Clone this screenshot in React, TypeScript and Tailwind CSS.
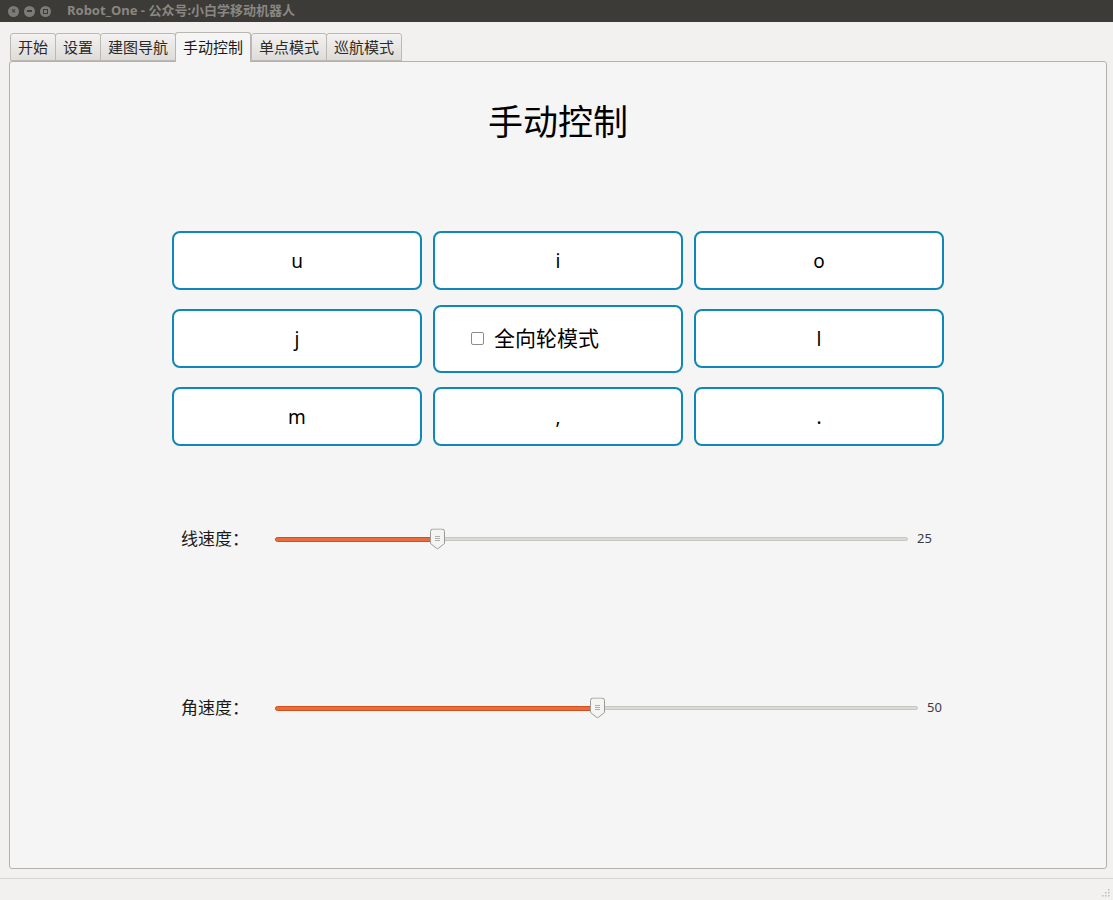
import React from 'react';

const TABS = ['开始', '设置', '建图导航', '手动控制', '单点模式', '巡航模式'];

const KEYS = [
  ['u', 'i', 'o'],
  ['j', null, 'l'],
  ['m', ',', '.'],
];

const FONT = { fontFamily: '"Noto Sans", "Noto Sans CJK SC", sans-serif' };

const Handle: React.FC = () => (
  <svg width="15" height="21" viewBox="0 0 15 21" className="absolute top-1/2 -translate-y-1/2 -ml-[7px]">
    <path d="M3 0.5 H12 Q14.5 0.5 14.5 3 V15 L7.5 20.5 L0.5 15 V3 Q0.5 0.5 3 0.5 Z" fill="#f4f4f3" stroke="#9c9a96" />
    <path d="M5 8 H10 M5 10 H10 M5 12 H10" stroke="#b0aeaa" strokeWidth="1" />
  </svg>
);

const Slider: React.FC<{ label: string; value: number; width: number }> = ({ label, value, width }) => {
  const pct = value / 100;
  return (
    <div className="flex items-center h-[24px]">
      <span className="w-[94px] text-[17px] text-[#1a1a1a]">{label}</span>
      <div className="relative h-[20px] flex items-center" style={{ width }}>
        <div className="absolute left-0 right-0 h-[4px] rounded-full bg-[#dcdad6] border border-[#c8c6c2]" />
        <div className="absolute left-0 h-[5px] rounded-full bg-[#ec6b3b] border border-[#d0501f]" style={{ width: (width - 14) * pct + 7 }} />
        <div className="absolute" style={{ left: (width - 14) * pct + 7 }}>
          <Handle />
        </div>
      </div>
      <span className="ml-[9px] text-[13px] text-[#3c3c3c]">{value}</span>
    </div>
  );
};

export default function App() {
  return (
    <div className="w-[1113px] h-[900px] flex flex-col bg-[#f2f1f0] overflow-hidden" style={FONT}>
      {/* title bar */}
      <div className="h-[22px] bg-[#3c3b37] flex items-center px-[8px] shrink-0">
        <div className="flex items-center gap-[5px]">
          <span className="w-[11px] h-[11px] rounded-full bg-[#7d7b76] flex items-center justify-center text-[8px] leading-none text-[#3c3b37] font-bold">×</span>
          <span className="w-[11px] h-[11px] rounded-full bg-[#7d7b76] flex items-center justify-center">
            <span className="w-[5px] h-[2px] bg-[#3c3b37]" />
          </span>
          <span className="w-[11px] h-[11px] rounded-full bg-[#7d7b76] flex items-center justify-center">
            <span className="w-[5px] h-[5px] border border-[#3c3b37]" />
          </span>
        </div>
        <span className="ml-[16px] text-[13px] font-bold text-[#8a8782]">Robot_One - 公众号:小白学移动机器人</span>
      </div>

      {/* tabs */}
      <div className="flex items-end pl-[10px] pt-[9px] h-[39px] shrink-0 relative z-10">
        {TABS.map((t, i) => {
          const active = i === 3;
          return (
            <div
              key={t}
              className={
                active
                  ? 'h-[30px] px-[7px] -mb-[1px] flex items-center text-[15px] text-[#1a1a1a] bg-[#f5f5f5] border border-b-0 border-[#b9b6b0] rounded-t-[3px]'
                  : 'h-[28px] px-[7px] flex items-center text-[15px] text-[#2a2a2a] bg-gradient-to-b from-[#f3f2f1] to-[#dedcd8] border border-[#bcb9b3] rounded-t-[3px] -mr-[1px]'
              }
            >
              {t}
            </div>
          );
        })}
      </div>

      {/* panel */}
      <div className="mx-[9px] w-[1098px] h-[808px] bg-[#f5f5f5] border border-[#b4b1ab] rounded-[3px] flex flex-col items-center shrink-0">
        <h1 className="mt-[37px] text-[35px] leading-[46px] text-black">手动控制</h1>

        <div className="mt-[86px] flex flex-col gap-[19px] w-[772px]">
          {KEYS.map((row, r) => (
            <div key={r} className="h-[59px] flex items-center gap-[11px]">
              {row.map((k, c) =>
                k === null ? (
                  <div
                    key={c}
                    className="w-[250px] h-[68px] shrink-0 bg-white border-2 border-[#0f88b9] rounded-[8px] flex items-center pl-[36px]"
                  >
                    <span className="w-[13px] h-[13px] border border-[#8e8c88] rounded-[2px] bg-white" />
                    <span className="ml-[10px] text-[21px] text-black">全向轮模式</span>
                  </div>
                ) : (
                  <div
                    key={c}
                    className="w-[250px] h-[59px] shrink-0 bg-white border-2 border-[#0f88b9] rounded-[8px] flex items-center justify-center text-[19px] text-black pt-[2px]"
                  >
                    {k}
                  </div>
                )
              )}
            </div>
          ))}
        </div>

        <div className="self-start ml-[171px] mt-[81px] flex flex-col">
          <Slider label="线速度：" value={25} width={633} />
          <div className="h-[145px]" />
          <Slider label="角速度：" value={50} width={643} />
        </div>
      </div>

      {/* status bar */}
      <div className="mt-[9px] flex-1 border-t border-[#d6d4d0] relative">
        <svg width="10" height="10" className="absolute right-[3px] bottom-[3px]">
          {[[8, 2], [8, 5], [5, 5], [8, 8], [5, 8], [2, 8]].map(([x, y], i) => (
            <rect key={i} x={x} y={y} width="1.5" height="1.5" fill="#c0beba" />
          ))}
        </svg>
      </div>
    </div>
  );
}
